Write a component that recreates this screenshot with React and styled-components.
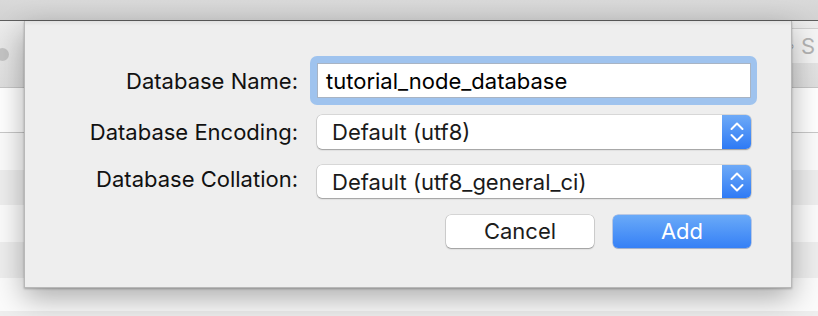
import React from "react";
import styled, { createGlobalStyle } from "styled-components";

const Global = createGlobalStyle`
  html, body { margin: 0; padding: 0; background: #f4f4f4; }
  body { font-family: Inter, "Liberation Sans", sans-serif; }
  * { box-sizing: border-box; }
`;

const Page = styled.div`
  position: relative;
  width: 818px;
  height: 316px;
  overflow: hidden;
  background: #f6f6f6;
`;

const TitleBar = styled.div`
  height: 21px;
  background: linear-gradient(#d9d9d9, #d2d2d2);
  border-bottom: 1px solid #5e5e5e;
`;

const Toolbar = styled.div`
  height: 67px;
  display: flex;
  align-items: center;
  justify-content: space-between;
  background: linear-gradient(#ececec, #dedede);
  border-bottom: 1px solid #c6c6c6;
`;

const RoundBtn = styled.div`
  width: 13px;
  height: 13px;
  border-radius: 50%;
  margin-left: -4px;
  margin-top: 0;
  background: #c4c4c4;
`;

const SearchField = styled.div`
  display: flex;
  align-items: center;
  gap: 6px;
  width: 32px;
  height: 35px;
  margin-top: -18px;
  background: #f4f4f4;
  border-top: 1px solid #cfcfcf;
  border-left: 1px solid #cfcfcf;
  color: #b4b4b4;
  font-size: 22px;
  padding-left: 0;
  overflow: hidden;
  white-space: nowrap;
`;

const Glass = styled.span`
  font-size: 14px;
  color: #9a9a9a;
`;

const HeaderRow = styled.div`
  height: 45px;
  background: #ffffff;
  border-bottom: 1px solid #c8c8c8;
`;

const Row = styled.div`
  height: ${(p) => p.$h}px;
  background: ${(p) => (p.$alt ? "#eeeeee" : "#fbfbfb")};
`;

const Sheet = styled.div`
  position: absolute;
  left: 24px;
  top: 21px;
  width: 768px;
  height: 267px;
  background: #eeeeee;
  border: 1px solid #b8b8b8;
  border-top: none;
  box-shadow: 0 10px 28px rgba(0, 0, 0, 0.32), 0 1px 2px rgba(0, 0, 0, 0.25);
  &::before {
    content: "";
    position: absolute;
    left: 0;
    right: 0;
    top: 0;
    height: 5px;
    background: linear-gradient(rgba(0, 0, 0, 0.06), rgba(0, 0, 0, 0));
  }
`;

const Form = styled.div`
  display: grid;
  grid-template-columns: 273px 434px;
  column-gap: 19px;
  align-items: center;
  padding-top: 35px;
  row-gap: 10px;
`;

const Label = styled.label`
  text-align: right;
  font-size: 22px;
  line-height: 26px;
  color: #111;
`;

const Ring = styled.div`
  margin-left: -7px;
  margin-right: -6px;
  padding: 7px 6px 7px 7px;
  border-radius: 7px;
  background: #9fc3ee;
`;

const TextInput = styled.div`
  height: 35px;
  background: #fff;
  border: 1px solid #a8b4c4;
  display: flex;
  align-items: center;
  padding-left: 8px;
  font-size: 22px;
  color: #000;
`;

const Select = styled.div`
  height: ${(p) => p.$h}px;
  display: flex;
  align-items: stretch;
  background: #fff;
  border-radius: 5px;
  box-shadow: 0 0 0 0.5px rgba(0, 0, 0, 0.18), 0 1px 1.5px rgba(0, 0, 0, 0.28);
  overflow: hidden;
  margin-top: ${(p) => p.$mt || 0}px;
`;

const SelectText = styled.div`
  flex: 1;
  display: flex;
  align-items: center;
  padding-left: 15px;
  font-size: 22px;
  color: #1a1a1a;
`;

const Stepper = styled.div`
  width: 29px;
  display: flex;
  align-items: center;
  justify-content: center;
  background: linear-gradient(#6eaaf7, #2e7af5);
`;

const Buttons = styled.div`
  grid-column: 2;
  display: flex;
  justify-content: flex-end;
  gap: 19px;
  margin-top: 7px;
`;

const Button = styled.button`
  width: ${(p) => (p.$primary ? 138 : 148)}px;
  height: 33px;
  border: none;
  border-radius: 5px;
  font-family: Inter, "Liberation Sans", sans-serif;
  font-size: 22px;
  padding: 0 0 1px;
  color: ${(p) => (p.$primary ? "#fff" : "#1c1c1c")};
  background: ${(p) =>
    p.$primary ? "linear-gradient(#6aaaf8, #3580f6)" : "#ffffff"};
  box-shadow: ${(p) =>
    p.$primary
      ? "0 0 0 0.5px rgba(30, 90, 200, 0.5), 0 1px 1px rgba(0,0,0,0.15)"
      : "0 0 0 0.5px rgba(0, 0, 0, 0.2), 0 1px 1.5px rgba(0, 0, 0, 0.28)"};
`;

const Chevrons = () => (
  <svg width="14" height="22" viewBox="0 0 14 22" fill="none">
    <path d="M1.5 8 L7 2.5 L12.5 8" stroke="#fff" strokeWidth="2" strokeLinecap="round" strokeLinejoin="round" />
    <path d="M1.5 14 L7 19.5 L12.5 14" stroke="#fff" strokeWidth="2" strokeLinecap="round" strokeLinejoin="round" />
  </svg>
);

export default function App() {
  const rows = [
    [37, false],
    [35, true],
    [37, false],
    [36, true],
    [33, false],
    [10, true],
  ];
  return (
    <Page>
      <Global />
      <TitleBar />
      <Toolbar>
        <RoundBtn />
        <SearchField>
          <Glass>⌕</Glass>
          <span>S</span>
        </SearchField>
      </Toolbar>
      <HeaderRow />
      {rows.map(([h, alt], i) => (
        <Row key={i} $h={h} $alt={alt} />
      ))}
      <Sheet>
        <Form>
          <Label>Database Name:</Label>
          <Ring>
            <TextInput>tutorial_node_database</TextInput>
          </Ring>
          <Label>Database Encoding:</Label>
          <Select $h={34}>
            <SelectText>Default (utf8)</SelectText>
            <Stepper>
              <Chevrons />
            </Stepper>
          </Select>
          <Label>Database Collation:</Label>
          <Select $h={33} $mt={6}>
            <SelectText>Default (utf8_general_ci)</SelectText>
            <Stepper>
              <Chevrons />
            </Stepper>
          </Select>
          <Buttons>
            <Button>Cancel</Button>
            <Button $primary>Add</Button>
          </Buttons>
        </Form>
      </Sheet>
    </Page>
  );
}
